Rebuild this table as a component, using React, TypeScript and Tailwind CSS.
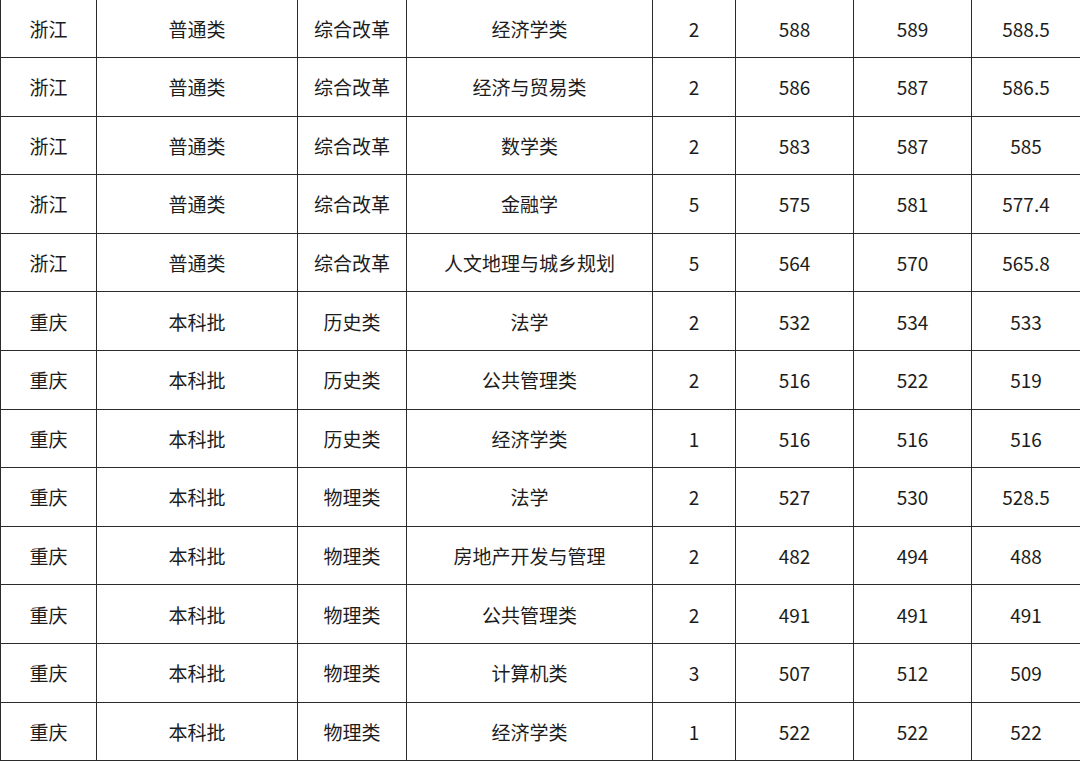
import React from 'react';

const rows: string[][] = [
  ['浙江', '普通类', '综合改革', '经济学类', '2', '588', '589', '588.5'],
  ['浙江', '普通类', '综合改革', '经济与贸易类', '2', '586', '587', '586.5'],
  ['浙江', '普通类', '综合改革', '数学类', '2', '583', '587', '585'],
  ['浙江', '普通类', '综合改革', '金融学', '5', '575', '581', '577.4'],
  ['浙江', '普通类', '综合改革', '人文地理与城乡规划', '5', '564', '570', '565.8'],
  ['重庆', '本科批', '历史类', '法学', '2', '532', '534', '533'],
  ['重庆', '本科批', '历史类', '公共管理类', '2', '516', '522', '519'],
  ['重庆', '本科批', '历史类', '经济学类', '1', '516', '516', '516'],
  ['重庆', '本科批', '物理类', '法学', '2', '527', '530', '528.5'],
  ['重庆', '本科批', '物理类', '房地产开发与管理', '2', '482', '494', '488'],
  ['重庆', '本科批', '物理类', '公共管理类', '2', '491', '491', '491'],
  ['重庆', '本科批', '物理类', '计算机类', '3', '507', '512', '509'],
  ['重庆', '本科批', '物理类', '经济学类', '1', '522', '522', '522'],
];

export default function App() {
  return (
    <div
      className="w-[1080px] h-[761px] overflow-hidden bg-white text-[#1c1c1c] text-[19px]"
      style={{ fontFamily: '"Noto Sans CJK SC", "Noto Sans", sans-serif' }}
    >
      <div className="w-[1082px] border-l border-[#2b2b2b]">
        {rows.map((r, i) => (
          <div
            key={i}
            className={`grid grid-cols-[96px_201px_109px_246px_83px_118px_118px_109px] border-b border-[#2b2b2b] ${
              i === 0 ? 'h-[58px]' : 'h-[58.6px]'
            }`}
          >
            {r.map((c, j) => (
              <div key={j} className="flex items-center justify-center border-r border-[#2b2b2b] leading-none">
                {c}
              </div>
            ))}
          </div>
        ))}
      </div>
    </div>
  );
}
